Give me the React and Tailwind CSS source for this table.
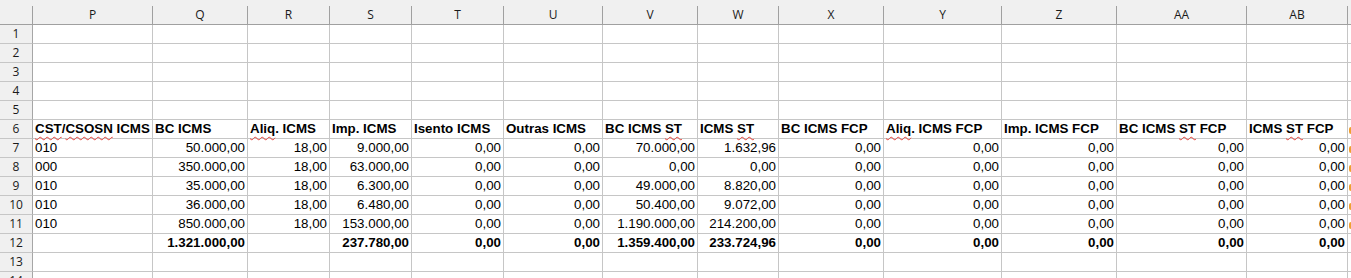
const COLS = [
  { id: "P", w: "w-[120px]", align: "left" },
  { id: "Q", w: "w-[95px]", align: "right" },
  { id: "R", w: "w-[82px]", align: "right" },
  { id: "S", w: "w-[82px]", align: "right" },
  { id: "T", w: "w-[92px]", align: "right" },
  { id: "U", w: "w-[99px]", align: "right" },
  { id: "V", w: "w-[95px]", align: "right" },
  { id: "W", w: "w-[81px]", align: "right" },
  { id: "X", w: "w-[105px]", align: "right" },
  { id: "Y", w: "w-[118px]", align: "right" },
  { id: "Z", w: "w-[115px]", align: "right" },
  { id: "AA", w: "w-[130px]", align: "right" },
  { id: "AB", w: "w-[101px]", align: "right" },
];

// spell-check squiggle
const Sq = ({ children }) => (
  <span className="underline decoration-wavy decoration-[#e8413a] decoration-1 underline-offset-[3px]">{children}</span>
);

const HEADERS = [
  <><Sq>CST</Sq>/<Sq>CSOSN</Sq> ICMS</>,
  "BC ICMS",
  <><Sq>Aliq</Sq>. ICMS</>,
  "Imp. ICMS",
  "Isento ICMS",
  "Outras ICMS",
  <>BC ICMS <Sq>ST</Sq></>,
  <>ICMS <Sq>ST</Sq></>,
  "BC ICMS FCP",
  <><Sq>Aliq</Sq>. ICMS FCP</>,
  "Imp. ICMS FCP",
  <>BC ICMS <Sq>ST</Sq> FCP</>,
  <>ICMS <Sq>ST</Sq> FCP</>,
];

const Z5 = ["0,00", "0,00", "0,00", "0,00", "0,00"];

const DATA = {
  7: ["010", "50.000,00", "18,00", "9.000,00", "0,00", "0,00", "70.000,00", "1.632,96", ...Z5],
  8: ["000", "350.000,00", "18,00", "63.000,00", "0,00", "0,00", "0,00", "0,00", ...Z5],
  9: ["010", "35.000,00", "18,00", "6.300,00", "0,00", "0,00", "49.000,00", "8.820,00", ...Z5],
  10: ["010", "36.000,00", "18,00", "6.480,00", "0,00", "0,00", "50.400,00", "9.072,00", ...Z5],
  11: ["010", "850.000,00", "18,00", "153.000,00", "0,00", "0,00", "1.190.000,00", "214.200,00", ...Z5],
  12: ["", "1.321.000,00", "", "237.780,00", "0,00", "0,00", "1.359.400,00", "233.724,96", ...Z5],
};

const ROWS = [1, 2, 3, 4, 5, 6, 7, 8, 9, 10, 11, 12, 13, 14];

function Row({ n }) {
  const vals = n === 6 ? HEADERS : DATA[n];
  const bold = n === 6 || n === 12;
  const orange = n >= 6 && n <= 11;
  return (
    <div className="flex h-[19px] shrink-0">
      <div className="w-[33px] shrink-0 bg-[#f0f0f0] border-r border-r-[#a6a6a6] border-b border-b-[#c6c6c6] flex items-center justify-center text-[12px] leading-[18px] text-[#1a1a1a]" style={{ fontFamily: "'Open Sans', 'Noto Sans', sans-serif" }}>
        {n}
      </div>
      {COLS.map((c, i) => (
        <div
          key={c.id}
          className={`${c.w} shrink-0 border-r border-b border-[#c6c6c6] px-[2px] leading-[18px] whitespace-nowrap ${
            bold ? "font-bold" : ""
          } ${n === 6 || c.align === "left" ? "text-left" : "text-right"}`}
        >
          {vals ? vals[i] : ""}
        </div>
      ))}
      {/* next column (AC) barely visible: only a sliver of its orange content */}
      <div className="flex-1 border-b border-[#c6c6c6] flex items-center pl-[1px]">
        {orange && <div className="w-[2px] h-[7px] mt-[2px] bg-[#f0a030] rounded-l-full" />}
      </div>
    </div>
  );
}

export default function App() {
  return (
    <div
      className="w-[1351px] h-[278px] overflow-hidden bg-white text-black text-[13.33px] flex flex-col"
      style={{ fontFamily: "'Liberation Sans', Arial, sans-serif" }}
    >
      {/* column header */}
      <div className="flex h-[25px] shrink-0 bg-[#f0f0f0] border-b border-[#a0a0a0]" style={{ fontFamily: "'Open Sans', 'Noto Sans', sans-serif" }}>
        <div className="w-[33px] shrink-0 pt-[6px]">
          <div className="h-[18px] border-r border-[#a0a0a0]" />
        </div>
        {COLS.map((c) => (
          <div key={c.id} className={`${c.w} shrink-0 pt-[6px]`}>
            <div className="h-[18px] border-r border-[#a0a0a0] flex items-center justify-center text-[12px] text-[#1a1a1a]">
              {c.id}
            </div>
          </div>
        ))}
        <div className="flex-1" />
      </div>
      {ROWS.map((n) => (
        <Row key={n} n={n} />
      ))}
    </div>
  );
}
